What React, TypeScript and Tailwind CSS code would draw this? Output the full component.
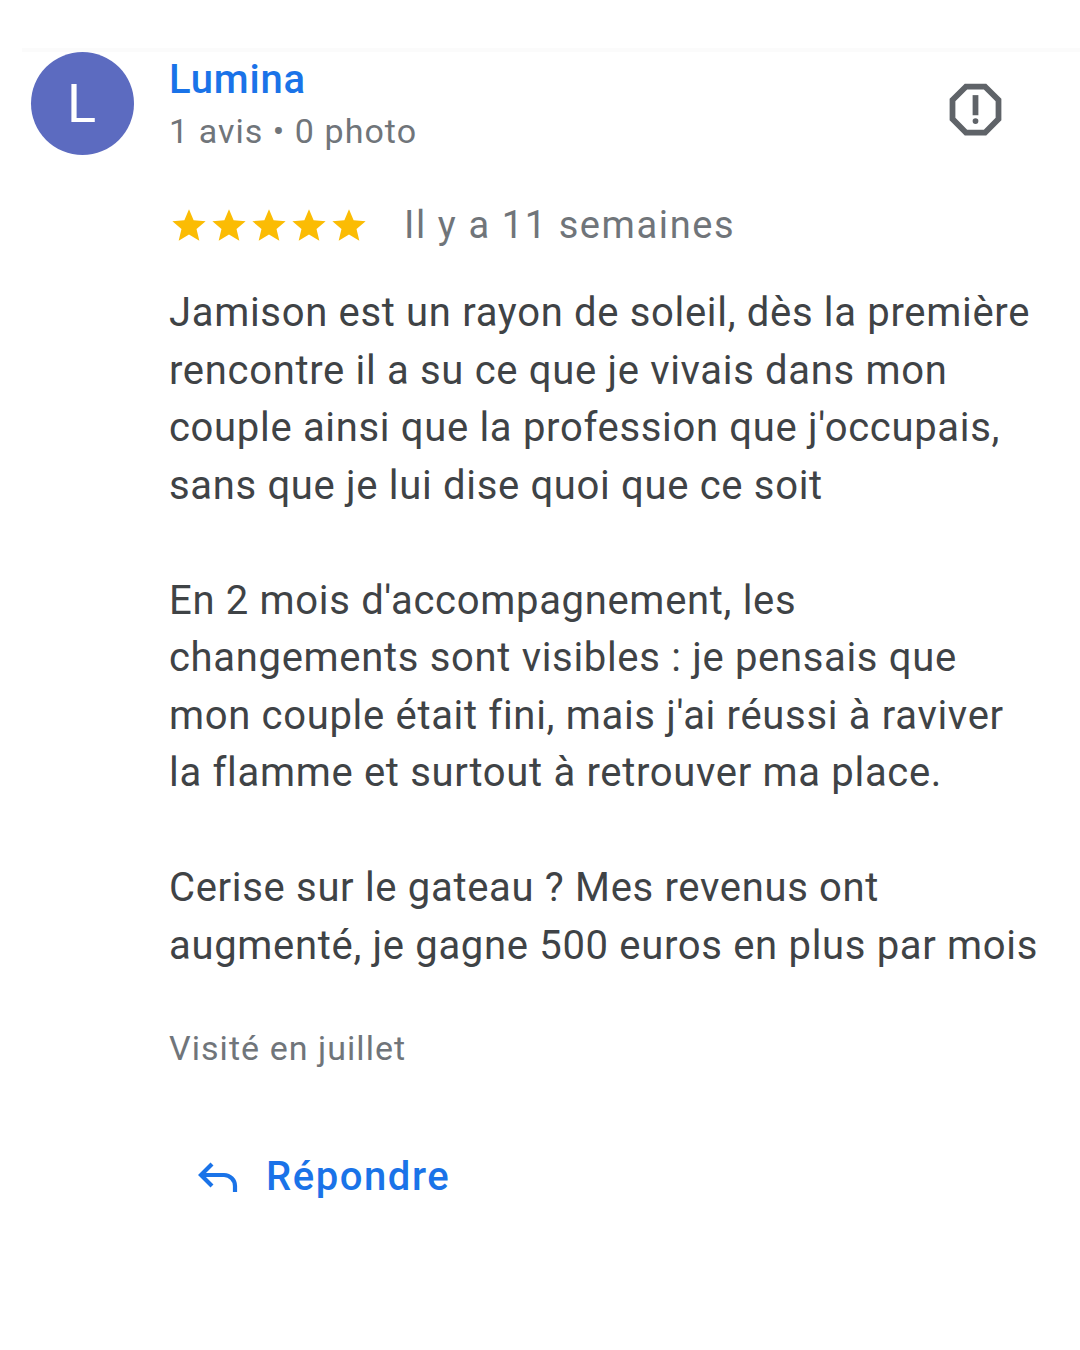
const Star = () => (
  <svg viewBox="0 0 24 24" className="w-[42px] h-[42px] -mx-[1px] shrink-0" fill="#fbbc04">
    <path d="M12 3l2.65 6.3 6.85.55-5.2 4.45 1.6 6.7L12 17.4l-5.9 3.6 1.6-6.7-5.2-4.45 6.85-.55z" />
  </svg>
);

const reviewParagraphs = [
  [
    "Jamison est un rayon de soleil, dès la première",
    "rencontre il a su ce que je vivais dans mon",
    "couple ainsi que la profession que j'occupais,",
    "sans que je lui dise quoi que ce soit",
  ],
  [
    "En 2 mois d'accompagnement, les",
    "changements sont visibles : je pensais que",
    "mon couple était fini, mais j'ai réussi à raviver",
    "la flamme et surtout à retrouver ma place.",
  ],
  [
    "Cerise sur le gateau ? Mes revenus ont",
    "augmenté, je gagne 500 euros en plus par mois",
  ],
];

export default function App() {
  return (
    <div className="w-[1080px] h-[1350px] bg-white pt-[48px] pl-[22px] font-['Roboto',sans-serif] overflow-hidden">
      <div className="border-t-[4px] border-[#fbfbfb] -mb-[4px]" />

      {/* Header */}
      <div className="flex pl-[9px] pt-[4px]">
        <div className="w-[103px] h-[103px] rounded-full bg-[#5c6bc0] text-white flex items-center justify-center text-[54px] pr-[2px]">
          L
        </div>
        <div className="ml-[35px] mt-[2px] w-[772px]">
          <div className="text-[#1a73e8] text-[40px] leading-[52px] font-medium tracking-[0.8px]">Lumina</div>
          <div className="text-[#70757a] text-[34px] leading-[50px] tracking-[1.05px]">1 avis • 0 photo</div>
        </div>
        <svg viewBox="0 0 24 24" className="w-[69px] h-[69px] mt-[23px]" fill="#5f6368">
          <path d="M15.73 3H8.27L3 8.27v7.46L8.27 21h7.46L21 15.73V8.27L15.73 3zM19 14.9L14.9 19H9.1L5 14.9V9.1L9.1 5h5.8L19 9.1v5.8z" />
          <circle cx="12" cy="16" r="1" />
          <rect x="11" y="7" width="2" height="7" />
        </svg>
      </div>

      {/* Rating */}
      <div className="flex items-center ml-[147px] mt-[29px] h-[80px]">
        <Star />
        <Star />
        <Star />
        <Star />
        <Star />
        <span className="ml-[35px] text-[#70757a] text-[38px] tracking-[1.6px]">Il y a 11 semaines</span>
      </div>

      {/* Review text */}
      <div className="ml-[147px] mt-[19px] text-[#3f4346] text-[40px] leading-[57.5px] tracking-[0.68px] flex flex-col gap-[57.5px] whitespace-nowrap">
        {reviewParagraphs.map((lines, i) => (
          <div key={i}>
            {lines.map((line) => (
              <div key={line}>{line}</div>
            ))}
          </div>
        ))}
      </div>

      <div className="ml-[147px] mt-[49px] text-[#70757a] text-[34px] leading-[50px] tracking-[1.05px]">Visité en juillet</div>

      {/* Reply */}
      <div className="flex items-center ml-[174px] mt-[74px]">
        <svg viewBox="0 0 44 44" className="w-[44px] h-[44px]" fill="none" stroke="#1a73e8" strokeWidth="4.2">
          <path d="M16 9L5 20l11 11" />
          <path d="M5 20h23a11 11 0 0 1 11 11v6" />
        </svg>
        <span className="ml-[26px] text-[#1a73e8] text-[40px] font-medium tracking-[1.55px]">Répondre</span>
      </div>
    </div>
  );
}
